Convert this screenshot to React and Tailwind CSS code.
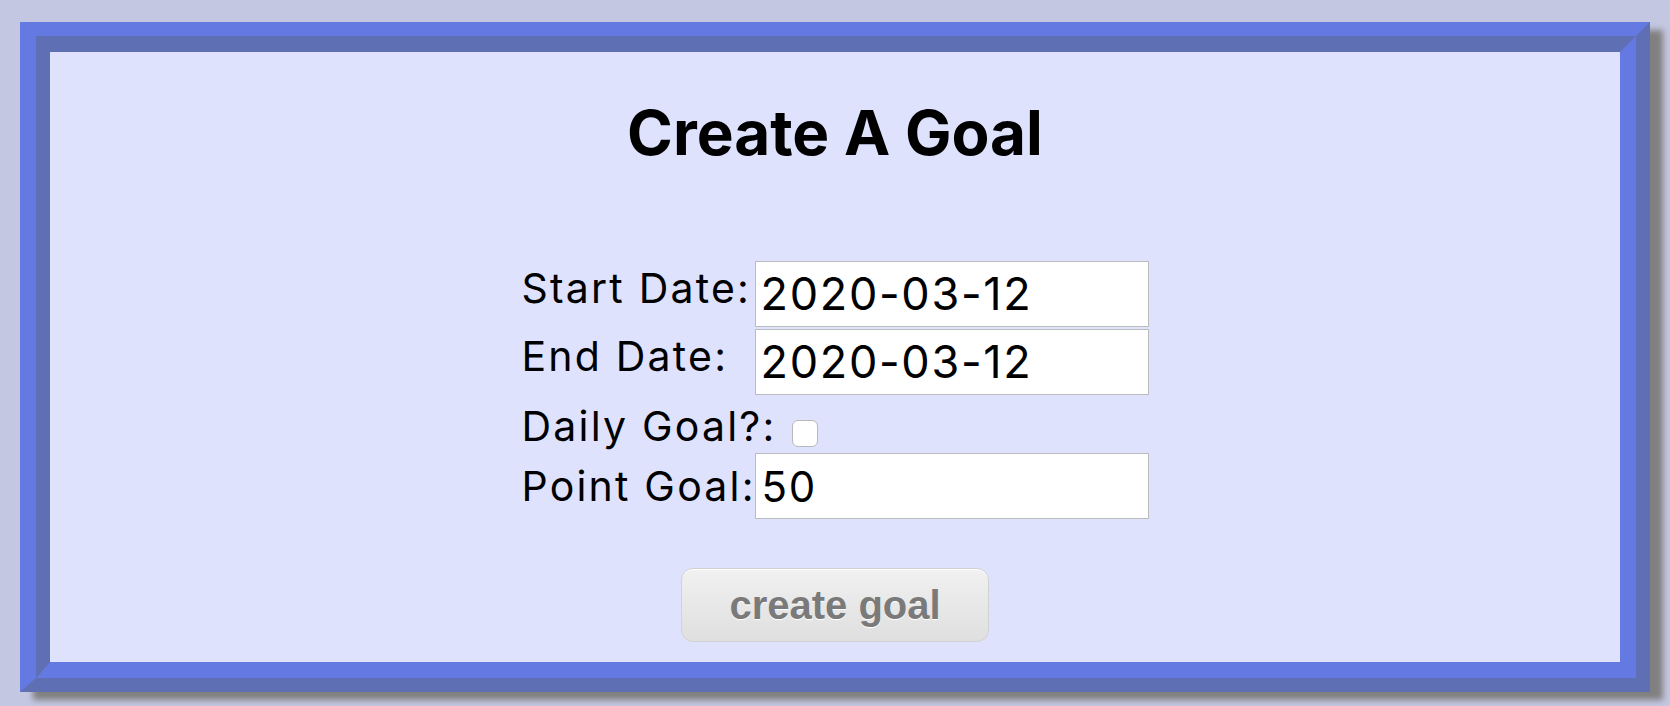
import { useState } from 'react'

const labelCls = "text-[41px] leading-[50px] tracking-[2.2px] text-black whitespace-nowrap"

export default function App() {
  const [form, setForm] = useState({ start: '2020-03-12', end: '2020-03-12', daily: false, points: '50' })

  return (
    <div className="min-h-screen bg-[#c3c7e1] pt-[22px] px-[20px] pb-[14px]" style={{ fontFamily: 'Inter, "Noto Sans", sans-serif' }}>
      {/* frame */}
      <div className="border-t-[14px] border-l-[16px] border-r-[14px] border-b-[14px] border-t-[#6479e1] border-l-[#6479e1] border-r-[#5e70b3] border-b-[#5e70b3] shadow-[13px_8px_6px_#808080]">
        <div className="border-t-[16px] border-l-[14px] border-r-[16px] border-b-[16px] border-t-[#5e70b3] border-l-[#5e70b3] border-r-[#6479e1] border-b-[#6479e1]">
          <div className="h-[610px] bg-[#dee2fd] flex flex-col items-center pt-[44px]">
            <h1 className="text-[62px] leading-[74px] font-bold text-black">Create A Goal</h1>

            {/* form */}
            <div className="mt-[91px] flex flex-col gap-[2px] w-[627px]">
              <div className="flex h-[66px]">
                <label className={`${labelCls} w-[233px] mt-[2px]`}>Start Date:</label>
                <input
                  type="text" value={form.start}
                  onChange={e => setForm({ ...form, start: e.target.value })}
                  className="w-[394px] h-[66px] bg-white border border-[#bcbcbc] pl-[5px] text-[45px] tracking-[1.7px] text-black outline-none"
                />
              </div>
              <div className="flex h-[66px]">
                <label className={`${labelCls} w-[233px] mt-[2px]`}>End Date:</label>
                <input
                  type="text" value={form.end}
                  onChange={e => setForm({ ...form, end: e.target.value })}
                  className="w-[394px] h-[66px] bg-white border border-[#bcbcbc] pl-[5px] text-[45px] tracking-[1.7px] text-black outline-none"
                />
              </div>
              <div className="flex items-start h-[54px]">
                <label className={`${labelCls} w-[270px] mt-[4px]`}>Daily Goal?:</label>
                <input
                  type="checkbox" checked={form.daily}
                  onChange={e => setForm({ ...form, daily: e.target.checked })}
                  className="appearance-none w-[26px] h-[27px] mt-[23px] rounded-[6px] bg-white border border-[#b8b8b8] checked:bg-[#6479e1]"
                />
              </div>
              <div className="flex h-[66px]">
                <label className={`${labelCls} w-[233px] mt-[8px]`}>Point Goal:</label>
                <input
                  type="text" value={form.points}
                  onChange={e => setForm({ ...form, points: e.target.value })}
                  className="w-[394px] h-[66px] bg-white border border-[#bcbcbc] pl-[6px] text-[42px] tracking-[1.7px] text-black outline-none"
                />
              </div>
            </div>

            <button
              className="mt-[49px] w-[308px] h-[74px] rounded-[12px] border border-[#d2d2d2] bg-gradient-to-b from-[#f1f1f1] to-[#dfdfdf] shadow-[inset_0_1px_0_#ffffff] text-[40px] font-bold text-[#7a7a7a] [text-shadow:0_1px_0_#ffffff]"
              style={{ fontFamily: '"Liberation Sans", Arial, sans-serif' }}
            >
              create goal
            </button>
          </div>
        </div>
      </div>
    </div>
  )
}
